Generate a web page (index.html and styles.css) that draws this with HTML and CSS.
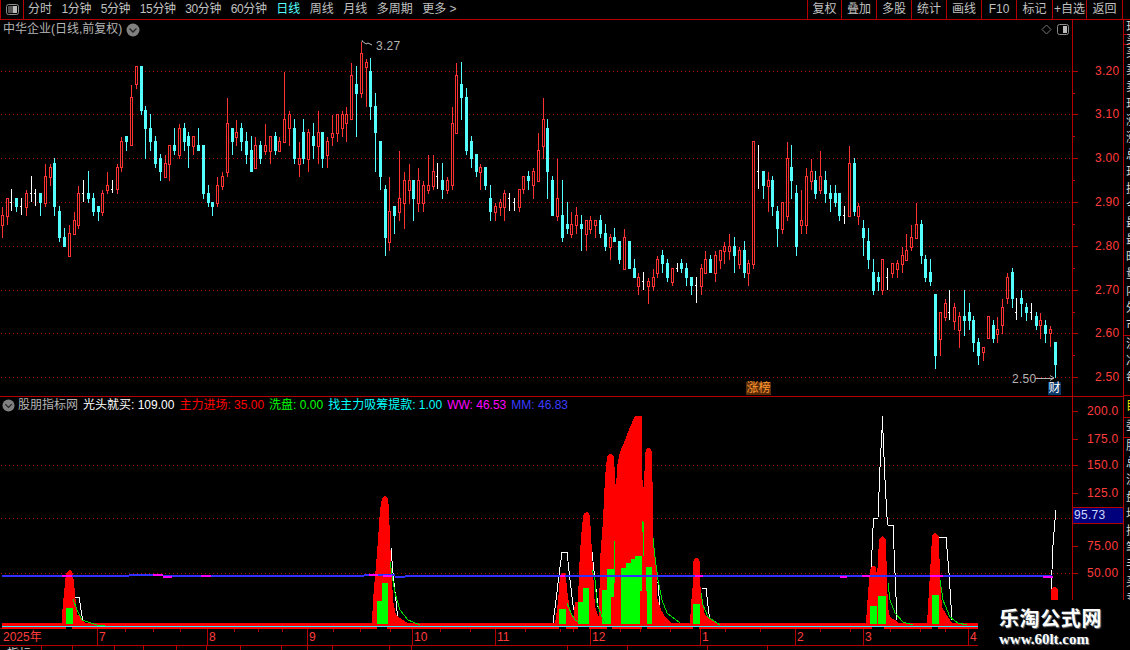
FILE: index.html
```html
<!DOCTYPE html>
<html lang="zh-CN">
<head>
    <meta charset="UTF-8">
    <title>中华企业 日线</title>
    <link rel="stylesheet" href="styles.css">
</head>
<body>
    <!-- Top toolbar -->
    <div class="toolbar">
        <div class="panel-toggle">
            <svg width="13" height="11" viewBox="0 0 13 11"><rect x="0.5" y="0.5" width="12" height="10" rx="2" fill="#000" stroke="#8c8c8c"/><rect x="2" y="2" width="5" height="7" fill="#555"/><rect x="7" y="2" width="4" height="7" fill="#bbb"/></svg>
        </div>
        <div class="periods">
            <span>分时</span><span class="num">1分钟</span><span class="num">5分钟</span><span class="num">15分钟</span><span class="num">30分钟</span><span class="num">60分钟</span>
            <span class="active">日线</span><span>周线</span><span>月线</span><span>多周期</span><span>更多 &gt;</span>
        </div>
        <div class="actions">
            <span>复权</span><span>叠加</span><span>多股</span><span>统计</span><span>画线</span><span>F10</span><span>标记</span><span>+自选</span><span>返回</span>
        </div>
    </div>

    <div class="workspace">
        <div class="charts">
            <!-- Price pane -->
            <div class="pane price-pane">
                <svg id="priceChart" class="chart" width="1123" height="376" viewBox="0 20 1123 376"></svg>
                <div class="pane-title">中华企业(日线,前复权)
                    <svg class="chevron" width="14" height="14" viewBox="0 0 14 14"><circle cx="7" cy="7" r="6.5" fill="#808080"/><path d="M3.5 5.5 7 9l3.5-3.5" fill="none" stroke="#222" stroke-width="1.3"/></svg>
                </div>
                <svg class="pane-tools" width="28" height="12" viewBox="0 0 28 12"><path d="M5.500 1 10 5.500 5.500 10 1 5.500Z" fill="none" stroke="#777"/><rect x="16.500" y="0.500" width="11" height="10" rx="2" fill="#000" stroke="#8c8c8c"/><rect x="22" y="2" width="4" height="7" fill="#bbb"/></svg>
                <span class="badge badge-limit">涨榜</span>
                <span class="badge badge-fin">财</span>
            </div>
            <!-- Indicator pane -->
            <div class="pane indicator-pane">
                <svg id="indicatorChart" class="chart" width="1123" height="232" viewBox="0 397 1123 232"></svg>
                <div class="legend">
                    <svg class="chevron" width="13" height="13" viewBox="0 0 14 14"><circle cx="7" cy="7" r="6.500" fill="#808080"/><path d="M3.500 5.500 7 9l3.500-3.500" fill="none" stroke="#222" stroke-width="1.300"/></svg>
                    <span class="legend-name">股朋指标网</span>
                    <span class="c-white">光头就买: 109.00</span>
                    <span class="c-red">主力进场: 35.00</span>
                    <span class="c-green">洗盘: 0.00</span>
                    <span class="c-cyan">找主力吸筹提款: 1.00</span>
                    <span class="c-magenta">WW: 46.53</span>
                    <span class="c-blue">MM: 46.83</span>
                </div>
                <div class="last-value">95.73</div>
            </div>
            <!-- Time axis -->
            <div class="time-axis" id="timeAxis"></div>
            <div class="status-row" id="statusRow"></div>
        </div>
        <!-- Quote list, cut off by the window edge -->
        <div class="side-list">
            <div class="side-group side-top">现</div>
            <div class="side-group side-thin">买</div>
            <div class="side-group side-rows">
                <div>买</div><div>卖</div><div>卖</div><div>现</div><div>涨</div><div>涨</div><div>总</div><div>现</div><div>换</div><div>今</div><div>最</div><div>最</div><div>昨</div><div>量</div><div>内</div><div>外</div><div>市</div>
            </div>
            <div class="side-group side-mid">
                <div>流</div><div>净</div><div>每</div>
            </div>
            <div class="side-group side-head">目</div>
            <div class="side-group side-row">委</div>
            <div class="side-group">
                <div>股</div><div>总</div><div>流</div><div>盘</div><div>均</div><div>振</div><div>笔</div><div>手</div><div>买</div><div>卖</div>
            </div>
        </div>
    </div>

    <!-- Site watermark -->
    <div class="watermark">
        <div class="wm-name">乐淘公式网</div>
        <div class="wm-url">www.60lt.com</div>
    </div>

    <script src="chart.js"></script>
</body>
</html>
```

FILE: styles.css
```css
/* Reset styles */
* {
    margin: 0;
    padding: 0;
    box-sizing: border-box;
}
body {
    width: 1130px;
    height: 650px;
    overflow: hidden;
    position: relative;
    background: #000;
    color: #c0c0c0;
    font-family: "Liberation Sans", "Noto Sans CJK SC", sans-serif;
    font-size: 12px;
}

/* Toolbar */
.toolbar {
    display: flex;
    height: 20px;
    border-bottom: 1px solid #b40000;
    line-height: 18px;
}
.panel-toggle {
    width: 24px;
    display: flex;
    align-items: center;
    justify-content: center;
    border-left: 1px solid #b40000;
    border-right: 1px solid #b40000;
}
.periods {
    flex: 1;
    display: flex;
    gap: 9.5px;
    padding-left: 4px;
}
.periods .num {
    letter-spacing: -0.35px;
}
.periods .active {
    color: #54ffff;
}
.actions {
    display: grid;
    grid-template-columns: 34px 35px 35px 35px 35px 35px 36px 34px 37px;
    margin-right: 7px;
}
.actions span {
    text-align: center;
    border-left: 1px solid #b40000;
}
.actions span:last-child {
    border-right: 1px solid #b40000;
}

/* Chart area */
.workspace {
    display: flex;
    height: 630px;
}
.charts {
    width: 1124px;
    border-right: 1px solid #b40000;
}
.pane {
    position: relative;
}
.price-pane {
    height: 377px;
    border-bottom: 1px solid #b40000;
}
.indicator-pane {
    height: 232px;
    border-bottom: 1px solid #b40000;
}
.chart {
    display: block;
    shape-rendering: crispEdges;
}
.chart text {
    font-family: "Liberation Sans", sans-serif;
    font-size: 12px;
    letter-spacing: 0.3px;
}
.pane-title {
    position: absolute;
    left: 3px;
    top: 1px;
    display: flex;
    align-items: center;
    gap: 4px;
    line-height: 17px;
    color: #b4b4b4;
}
.pane-tools {
    position: absolute;
    left: 1041px;
    top: 4px;
}
.badge {
    position: absolute;
    top: 362px;
    height: 13px;
    line-height: 13px;
    text-align: center;
}
.badge-limit {
    left: 746px;
    width: 25px;
    background: #5a2c08;
    color: #ff9a30;
}
.badge-fin {
    left: 1048px;
    width: 13px;
    background: #0a3a6c;
    color: #fff;
}

/* Indicator legend */
.legend {
    position: absolute;
    left: 2px;
    top: 0;
    display: flex;
    align-items: center;
    gap: 5px;
    line-height: 17px;
    white-space: nowrap;
}
.legend .chevron {
    margin-right: -2px;
}
.legend-name { color: #b4b4b4; }
.c-white { color: #fff; }
.c-red { color: #ff0000; }
.c-green { color: #00ff00; }
.c-cyan { color: #00ffff; }
.c-magenta { color: #ff00ff; }
.c-blue { color: #3c3cff; }
.last-value {
    position: absolute;
    left: 1073px;
    top: 110px;
    width: 50px;
    height: 17px;
    padding-left: 1px;
    line-height: 15px;
    color: #cfd8ff;
    background: #00007c;
    border-top: 1px solid #b40000;
    border-bottom: 1px solid #b40000;
    letter-spacing: 0.3px;
}

/* Time axis */
.time-axis {
    position: relative;
    height: 17px;
    border-bottom: 1px solid #b40000;
    color: #ff3c3c;
    line-height: 16px;
}
.time-mark {
    position: absolute;
    top: 0;
    height: 16px;
    padding-left: 1px;
    border-left: 1px solid #b40000;
}
.time-mark.first {
    left: 3px;
    padding-left: 0;
    border-left: none;
}
.time-tick {
    position: absolute;
    top: 0;
    width: 1px;
    height: 3px;
    background: #b40000;
}
.status-row {
    height: 4px;
    overflow: hidden;
    display: flex;
    padding-top: 2px;
    line-height: 12px;
    color: #d0d0d0;
}
.status-cell {
    height: 12px;
    margin-top: -2px;
    padding: 2px 0 0 7px;
    border-right: 1px solid #b40000;
    white-space: nowrap;
}

/* Cropped list at the right edge */
.side-list {
    width: 6px;
    overflow: hidden;
    padding-left: 2px;
    color: #d8d8d8;
    line-height: 17px;
    white-space: nowrap;
}
.side-group {
    margin-left: -2px;
    padding-left: 2px;
    border-bottom: 1px solid #b40000;
}
.side-group:last-child {
    border-bottom: none;
}
.side-top {
    height: 15px;
    line-height: 15px;
}
.side-thin {
    height: 10px;
    line-height: 10px;
}
.side-rows {
    height: 291px;
}
.side-mid {
    height: 60px;
}
.side-head {
    height: 22px;
    line-height: 21px;
    color: #e6e000;
}
.side-row {
    height: 20px;
}

/* Site watermark */
.watermark {
    position: absolute;
    left: 978px;
    top: 600px;
    width: 152px;
    height: 50px;
    background: #000;
    color: #fff;
    padding: 7px 0 0 21px;
}
.wm-name {
    font-family: "Noto Sans CJK SC", sans-serif;
    font-size: 20px;
    font-weight: 700;
    letter-spacing: 0.6px;
    line-height: 22px;
    text-shadow: 1px 1px 1px #777;
}
.wm-url {
    font-family: "Liberation Serif", serif;
    font-size: 15px;
    font-weight: 700;
    line-height: 17px;
    margin-top: 2px;
    text-shadow: 1px 1px 1px #777;
}
```

FILE: chart.js
```js
const RED = '#ff3232';
const CYAN = '#54ffff';
const LINE = '#b40000';

// type, high, body top, body bottom, low (page y pixels). w = doji: high, low, tick
const candles = [
    ['r',207,215,225,237],['r',198,198,216,224],['w',189,211,202],['c',198,198,206,211],['w',198,215,206],
    ['r',190,193,207,215],['w',176,202,193],['w',189,206,193],['c',193,193,202,215],['r',164,176,203,206],
    ['r',164,167,177,185],['c',158,163,206,215],['c',206,211,237,241],['c',228,237,246,246],['r',225,233,256,256],
    ['r',212,220,234,234],['r',186,193,225,228],['w',180,202,193],['c',171,193,198,202],['c',193,198,211,215],
    ['c',206,206,211,220],['r',190,193,212,215],['r',172,185,190,193],['w',180,193,189],['r',164,167,189,193],
    ['r',137,141,167,171],['c',136,136,141,150],['r',85,97,145,145],['r',66,66,84,88],['c',66,66,110,114],
    ['c',106,110,128,158],['c',114,128,141,150],['c',136,141,163,167],['c',154,158,171,180],['r',155,163,177,177],
    ['r',145,145,164,180],['c',128,145,150,154],['r',124,128,155,158],['c',123,128,141,150],['c',132,136,145,167],
    ['r',136,136,146,154],['c',128,145,150,150],['c',145,145,193,198],['c',185,193,202,206],['c',202,202,206,215],
    ['r',177,185,203,206],['r',172,176,186,189],['r',98,123,172,176],['c',128,128,141,154],['r',120,132,137,145],
    ['c',123,128,141,150],['c',132,141,154,163],['c',136,150,171,171],['r',137,145,168,168],['c',141,145,158,163],
    ['r',124,145,151,154],['r',136,136,151,163],['c',132,136,150,154],['r',137,141,151,151],['r',72,119,142,142],
    ['r',111,114,128,145],['c',119,128,158,163],['r',142,158,164,176],['c',119,132,158,163],['r',129,132,159,171],
    ['c',123,136,145,158],['r',111,132,146,163],['c',132,132,158,167],['r',137,141,155,167],['r',115,133,137,145],
    ['r',114,114,133,141],['r',111,114,128,136],['r',107,114,123,141],['r',63,75,119,119],['c',66,84,93,136],
    ['r',42,53,93,97],['r',59,62,67,106],['c',58,71,106,119],['c',93,106,132,171],['c',141,141,176,189],
    ['c',185,189,237,255],['r',177,211,242,250],['c',206,206,215,233],['r',151,198,212,220],['r',172,180,203,228],
    ['r',164,180,190,203],['c',180,180,198,220],['r',168,180,203,211],['r',181,185,203,211],['r',155,185,190,193],
    ['r',155,171,186,189],['w',163,189,176],['c',163,180,189,198],['r',177,180,190,193],['r',107,123,185,189],
    ['r',63,75,133,133],['c',62,84,97,119],['c',88,97,150,154],['c',136,141,158,167],['c',154,154,171,176],
    ['r',164,167,172,189],['c',167,167,185,189],['c',185,198,211,220],['r',203,206,212,220],['r',199,202,207,215],
    ['r',190,193,207,220],['w',193,211,198],['w',198,211,202],['r',189,189,207,211],['r',176,176,189,193],
    ['c',171,176,180,189],['r',168,171,185,198],['r',133,150,181,181],['r',98,119,146,158],['c',119,128,171,198],
    ['c',176,180,215,215],['r',159,198,216,220],['c',180,215,237,241],['c',202,224,228,233],['r',212,224,234,237],
    ['r',207,215,225,233],['c',215,224,228,250],['r',220,220,234,250],['r',216,220,229,233],['r',220,220,225,237],
    ['c',215,220,233,237],['c',224,233,246,250],['r',234,237,247,259],['c',228,237,241,241],['c',241,241,259,263],
    ['r',229,237,269,269],['c',241,241,268,268],['c',259,268,277,277],['r',273,277,286,294],['w',272,290,281],
    ['r',278,281,286,303],['r',269,277,286,290],['r',256,259,273,277],['c',250,255,263,272],['c',259,263,277,281],
    ['r',268,268,282,285],['w',263,272,268],['c',259,263,268,272],['c',263,268,277,285],['c',277,277,285,294],
    ['w',277,303,285],['r',264,268,286,294],['r',251,259,273,273],['c',255,259,272,272],['r',251,255,273,281],
    ['r',250,250,260,268],['r',242,246,251,263],['r',234,246,251,259],['c',237,246,255,272],['r',247,250,264,268],
    ['c',241,250,272,277],['r',260,263,273,285],['r',141,141,264,268],['w',145,189,171],['c',171,171,185,198],
    ['r',172,180,186,211],['c',176,180,206,215],['c',206,211,228,246],['r',202,202,229,233],['r',142,158,216,220],
    ['c',145,167,180,198],['c',185,193,246,255],['r',190,220,225,233],['r',168,176,225,233],['r',159,171,181,189],
    ['c',171,180,193,198],['r',151,176,190,193],['c',171,180,193,202],['c',185,193,198,211],['c',185,193,202,206],
    ['c',193,193,215,220],['w',206,224,215],['r',146,163,216,216],['c',158,163,211,215],['r',203,206,216,224],
    ['c',220,228,237,255],['c',228,241,259,268],['c',259,272,290,294],['c',272,277,281,290],['r',259,259,290,294],
    ['w',268,290,277],['r',263,263,273,277],['r',260,263,269,277],['r',247,255,264,272],['r',234,250,260,260],
    ['r',225,237,247,250],['r',203,224,238,238],['c',220,224,255,263],['c',255,259,277,281],['c',259,272,281,285],
    ['c',294,294,355,368],['r',312,312,339,355],['r',299,303,317,320],['w',290,320,312],['r',303,307,321,329],
    ['r',312,316,330,347],['c',290,316,320,335],['c',303,312,320,329],['c',316,320,342,351],['c',338,342,355,364],
    ['r',347,347,352,360],['r',316,316,338,338],['c',320,325,338,342],['r',317,329,334,342],['r',299,307,325,333],
    ['r',273,277,298,303],['c',268,272,298,307],['w',298,320,312],['c',290,298,303,316],['c',303,307,312,320],
    ['w',303,320,312],['c',312,316,325,329],['r',313,320,325,338],['c',320,325,333,342],['r',326,329,333,346],
    ['c',342,342,364,377]
];

// indicator shapes, page coordinates
const redAreas = [
    '62,623 62,615 64,593 65,583 66,574 68,571 70,570 72,571 73,574 74,583 75,593 77,615 79,615 82,620 86,623',
    '372,623 373,600 376,565 378,540 380,510 382,498 385,496 388,498 389,510 390,540 392,580 393,600 396,615 403,620 408,623',
    '555,623 557,610 559,590 560,575 562,573 565,573 566,575 567,590 570,610 575,620 578,623',
    '573,623 575,602 578,602 579,570 581,537 583,517 584,513 587,512 589,513 590,517 592,553 593,570 594,590 595,607 598,615 599,617 600,560 603,520 605,477 607,457 609,454 612,454 614,457 615,477 616,490 617,467 620,452 625,440 630,427 635,416 642,416 642,477 644,490 645,453 647,448 650,448 652,452 653,510 653,543 657,570 657,597 661,610 666,618 672,623',
    '690,623 691,605 693,582 693,562 695,558 698,558 700,562 700,582 702,600 705,615 710,618 715,623',
    '866,623 868,593 870,570 872,566 873,566 876,567 877,577 879,540 881,537 882,536 884,537 886,540 887,580 888,607 890,617 895,620 898,623',
    '927,623 928,607 930,573 932,537 933,534 935,533 937,534 939,537 940,580 942,607 948,617 952,623',
    '1051,600 1051,590 1053,587 1056,587 1058,590 1058,600'
];
// x1, x2, top
const greenBars = [
    [66,73,608],[377,382,601],[382,388,583],[559,566,609],[578,583,602],[583,589,588],[602,607,590],[607,614,569],
    [621,626,568],[626,631,563],[631,635,559],[635,642,556],[646,652,567],[693,700,604],[870,877,606],[878,886,596],[932,939,595]
];
const redOverBars = [[611,618,597],[640,647,591]];
const greenLines = [
    '73,599 77,610 82,620 97,625 105,626',
    '390,562 395,593 400,610 408,620 420,625',
    '567,603 571,613 575,620 580,623',
    '592,570 595,580 597,603 602,617 605,623',
    '614,541 614,583',
    '642,532 643,521 644,556',
    '653,538 655,557 658,580 662,600 667,613 680,623',
    '701,593 703,605 708,617 720,625',
    '888,583 890,600 895,613 903,622 913,625',
    '940,580 943,600 950,617 958,623 967,625'
];
const whiteLines = [
    '75,597 79,597 83,622',
    '391,548 393,573 398,620',
    '553,623 556,600 559,575 562,552 567,552 570,580 573,605 576,620',
    '592,552 595,580 598,607',
    '655,582 658,582 660,610',
    '702,588 706,588 710,623',
    '871,573 873,528 873,518 878,518 880,467 882,430 882,416 883,433 885,480 887,517 888,525 893,525 895,573 897,620',
    '939,537 946,537 949,573 952,620',
    '1051,595 1053,545 1055,520 1056,510'
];
// ww and mm line pieces: x1, x2, y
const blueSegs = [[2,129,575],[129,163,574],[163,177,575],[177,364,575],[364,395,574],[395,405,576],[405,675,575],[675,1052,575]];
const pinkSegs = [[62,72,575],[153,163,574],[163,172,576],[201,211,575],[369,378,574],[383,392,575],[560,565,575],[695,703,575],[840,847,576],[862,870,575],[930,943,575],[1043,1053,576]];
const baseNotches = [[66,72],[377,387],[559,566],[578,589],[607,612],[642,647],[693,699],[872,884],[932,938]];

function hline(y, x1, x2, color) {
    return `<rect x="${x1}" y="${y}" width="${x2 - x1}" height="1" fill="${color}"/>`;
}
function vline(x, y1, y2, color) {
    return `<rect x="${x}" y="${y1}" width="1" height="${y2 - y1}" fill="${color}"/>`;
}
function dotted(y) {
    return `<line x1="1" x2="1072" y1="${y + 0.5}" y2="${y + 0.5}" stroke="#a80000" stroke-dasharray="1 3"/>`;
}
function label(x, y, text) {
    return `<text x="${x}" y="${y + 4}" fill="#ff3c3c">${text}</text>`;
}
function poly(points, color) {
    return `<polyline points="${points}" fill="none" stroke="${color}" stroke-linejoin="round"/>`;
}

function candleSvg(c, i) {
    const x = Math.floor(2.3 + 4.786 * i);
    if (c[0] === 'w') {
        return vline(x, c[1], c[2], '#fff') + hline(c[3], x - 1, x, '#fff');
    }
    if (c[0] === 'c') {
        return vline(x, c[1], c[4] + 1, CYAN) + `<rect x="${x - 1}" y="${c[2]}" width="3" height="${c[3] - c[2] + 1}" fill="${CYAN}"/>`;
    }
    return vline(x, c[1], c[2], RED) + vline(x, c[3], c[4] + 1, RED) +
        `<rect x="${x - 0.5}" y="${c[2] + 0.5}" width="2" height="${c[3] - c[2]}" fill="#000" stroke="${RED}"/>`;
}

function drawPrice() {
    let html = '';
    const gridY = [71, 114, 158, 202, 246, 290, 333, 377];
    const names = ['3.20', '3.10', '3.00', '2.90', '2.80', '2.70', '2.60', '2.50'];
    gridY.forEach((y, i) => {
        html += dotted(y) + hline(y, 1072, 1078, LINE) + label(1095, y, names[i]);
        if (i < 7) html += hline(Math.round((y + gridY[i + 1]) / 2), 1072, 1075, LINE);
    });
    html += vline(1072, 20, 396, LINE);
    html += candles.map(candleSvg).join('');
    // high and low markers
    html += `<path d="M361.500 41H363M362 41 366 44 368 43 372 45" fill="none" stroke="#bbb" shape-rendering="auto"/>`;
    html += `<text x="376" y="50" fill="#b4b4b4">3.27</text>`;
    html += `<text x="1012" y="383" fill="#b4b4b4">2.50</text>`;
    html += hline(378, 1035, 1054, '#b4b4b4') + `<path d="M1050 375.500 1054 378 1050 380.500" fill="none" stroke="#b4b4b4" shape-rendering="auto"/>`;
    document.getElementById('priceChart').innerHTML = html;
}

function drawIndicator() {
    let html = '';
    [465, 518, 573].forEach(y => { html += dotted(y); });
    whiteLines.forEach(p => { html += poly(p, '#fff'); });
    redAreas.forEach(p => { html += `<polygon points="${p}" fill="#ff0000"/>`; });
    html += `<rect x="2" y="623" width="976" height="6" fill="#ff0000"/>`;
    greenBars.forEach(b => { html += `<rect x="${b[0]}" y="${b[2]}" width="${b[1] - b[0]}" height="${624 - b[2]}" fill="#00ff00"/>`; });
    redOverBars.forEach(b => { html += `<rect x="${b[0]}" y="${b[2]}" width="${b[1] - b[0]}" height="${624 - b[2]}" fill="#ff0000"/>`; });
    greenLines.forEach(p => { html += poly(p, '#00e000'); });
    baseNotches.forEach(n => { html += `<rect x="${n[0]}" y="627" width="${n[1] - n[0]}" height="2" fill="#000"/>`; });
    html += `<rect x="2" y="626" width="976" height="1" fill="#30e8ff"/>`;
    blueSegs.forEach(s => { html += `<rect x="${s[0]}" y="${s[2]}" width="${s[1] - s[0]}" height="2" fill="#3030ff"/>`; });
    pinkSegs.forEach(s => { html += `<rect x="${s[0]}" y="${s[2]}" width="${s[1] - s[0]}" height="2" fill="#ff00ff"/>`; });

    // value axis
    html += vline(1072, 397, 629, LINE);
    const ticks = [[411, '200.0'], [439, '175.0'], [465, '150.0'], [493, '125.0'], [546, '75.00'], [573, '50.00']];
    ticks.forEach(t => { html += hline(t[0], 1072, 1078, LINE) + label(1087, t[0], t[1]); });
    document.getElementById('indicatorChart').innerHTML = html;
}

function drawTimeAxis() {
    const marks = [[97, '7'], [207, '8'], [307, '9'], [412, '10'], [495, '11'], [590, '12'], [700, '1'], [795, '2'], [863, '3'], [968, '4']];
    const small = [125, 153, 180, 234, 258, 282, 333, 360, 390, 440, 470, 525, 560, 573, 620, 640, 670, 725, 760, 820, 850, 890, 920, 945];
    let html = '<span class="time-mark first">2025年</span>';
    marks.forEach(m => { html += `<span class="time-mark" style="left:${m[0]}px">${m[1]}</span>`; });
    small.forEach(x => { html += `<span class="time-tick" style="left:${x}px"></span>`; });
    document.getElementById('timeAxis').innerHTML = html;
}

function drawStatusRow() {
    // cell widths of the row that the window cuts off
    const cells = [[42, '指标'], [31, ''], [42, ''], [29, ''], [33, ''], [30, ''], [34, ''], [41, ''], [26, ''], [25, ''], [57, ''], [22, ''], [156, ''], [60, ''], [80, ''], [60, '']];
    document.getElementById('statusRow').innerHTML = cells
        .map(c => `<span class="status-cell" style="width:${c[0]}px">${c[1]}</span>`)
        .join('');
}

drawPrice();
drawIndicator();
drawTimeAxis();
drawStatusRow();
```
